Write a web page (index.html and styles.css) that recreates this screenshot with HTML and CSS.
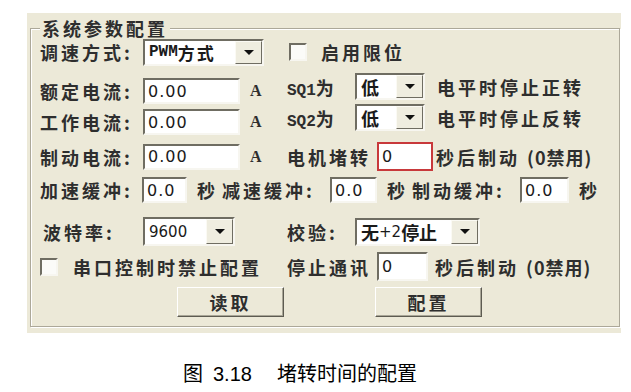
FILE: index.html
```html
<!DOCTYPE html>
<html lang="zh-CN">
<head>
    <meta charset="UTF-8">
    <title>系统参数配置</title>
    <link rel="stylesheet" href="styles.css">
</head>
<body>

<div class="window">
    <fieldset class="group">
        <legend>系统参数配置</legend>

        <div class="row split r1">
            <div class="cell">
                <span class="lbl-main">调速方式:</span>
                <div class="combo combo-mode">
                    <span class="combo-text"><span class="mono">PWM</span><span class="cjk-sm">方式</span></span>
                    <span class="combo-btn"></span>
                </div>
            </div>
            <div class="cell">
                <span class="check check-limit"></span>
                <span class="check-text">启用限位</span>
            </div>
        </div>

        <div class="row split r2">
            <div class="cell">
                <span class="lbl-main">额定电流:</span>
                <span class="field field-amp">0.00</span>
                <span class="unit">A</span>
            </div>
            <div class="cell raise">
                <span class="lbl-sq"><span class="mono">SQ1</span>为</span>
                <div class="combo combo-level">
                    <span class="combo-text">低</span>
                    <span class="combo-btn"></span>
                </div>
                <span class="after">电平时停止正转</span>
            </div>
        </div>

        <div class="row split r3">
            <div class="cell">
                <span class="lbl-main">工作电流:</span>
                <span class="field field-amp">0.00</span>
                <span class="unit">A</span>
            </div>
            <div class="cell raise">
                <span class="lbl-sq"><span class="mono">SQ2</span>为</span>
                <div class="combo combo-level">
                    <span class="combo-text">低</span>
                    <span class="combo-btn"></span>
                </div>
                <span class="after">电平时停止反转</span>
            </div>
        </div>

        <div class="row split r4">
            <div class="cell">
                <span class="lbl-main">制动电流:</span>
                <span class="field field-amp">0.00</span>
                <span class="unit">A</span>
            </div>
            <div class="cell">
                <span class="lbl-right">电机堵转</span>
                <span class="field field-red">0</span>
                <span class="after-sm">秒后制动 <span class="note">(0禁用)</span></span>
            </div>
        </div>

        <div class="row r5">
            <span class="lbl-buf first">加速缓冲:</span>
            <span class="field field-buf b1">0.0</span>
            <span class="sec">秒</span>
            <span class="lbl-buf">减速缓冲:</span>
            <span class="field field-buf b2">0.0</span>
            <span class="sec">秒</span>
            <span class="lbl-buf">制动缓冲:</span>
            <span class="field field-buf b3">0.0</span>
            <span class="sec">秒</span>
        </div>

        <div class="row split r6">
            <div class="cell">
                <span class="lbl-baud">波特率:</span>
                <div class="combo combo-baud">
                    <span class="combo-text sans">9600</span>
                    <span class="combo-btn"></span>
                </div>
            </div>
            <div class="cell">
                <span class="lbl-sq">校验:</span>
                <div class="combo combo-parity">
                    <span class="combo-text">无<span class="sans">+2</span>停止</span>
                    <span class="combo-btn"></span>
                </div>
            </div>
        </div>

        <div class="row split r7">
            <div class="cell">
                <span class="check"></span>
                <span class="check-text wide">串口控制时禁止配置</span>
            </div>
            <div class="cell">
                <span class="lbl-right">停止通讯</span>
                <span class="field field-stop">0</span>
                <span class="after-md">秒后制动 <span class="note">(0禁用)</span></span>
            </div>
        </div>

        <div class="row buttons">
            <button class="btn">读取</button>
            <button class="btn">配置</button>
        </div>
    </fieldset>
</div>

<div class="caption">
    <span>图</span><span class="fig-no">3.18</span><span class="fig-title">堵转时间的配置</span>
</div>

</body>
</html>
```

FILE: styles.css
```css
body {
    margin: 0;
    background: #fff;
    font-family: "Noto Sans CJK SC", sans-serif;
    color: #2e2e2e;
}

.window {
    margin: 13px 0 0 27px;
    width: 590px;
    padding: 5px 1px 6px 3px;
    background: #ece9d8;
}

.group {
    margin: 0;
    min-width: 0;
    padding: 0 9px 9px 9px;
    border: 1px solid #aca899;
    box-shadow: inset 1px 1px #fff, 1px 1px #fff;
}

.group legend {
    padding: 0 2px 0 2px;
    font-size: 18px;
    font-weight: bold;
    line-height: 20px;
    letter-spacing: 3px;
    background: #ece9d8;
}

.row {
    display: flex;
    align-items: center;
    height: 28px;
    font-size: 18px;
    font-weight: bold;
    letter-spacing: 3px;
    white-space: nowrap;
}

.row.split {
    display: grid;
    grid-template-columns: 247px auto;
}

.cell {
    display: flex;
    align-items: center;
    height: 100%;
}

.r2 { margin-top: 11px; }
.r3 { margin-top: 3px; }
.r4 { margin-top: 6px; }
.r5 { margin-top: 6px; }
.r6 { margin-top: 13px; height: 29px; }
.r7 { margin-top: 6px; height: 29px; }
.buttons { margin-top: 6px; height: 30px; padding-left: 137px; gap: 91px; }

.raise { margin-top: -9px; }

/* labels */
.lbl-main { width: 103px; }
.lbl-sq { width: 68px; }
.lbl-right { width: 90px; }
.lbl-baud { width: 100px; margin-left: 3px; }
.lbl-buf { width: 108px; margin-left: 3px; }
.lbl-buf.first { width: 102px; margin-left: 0; }
.check-text { margin-left: 14px; }
.check-text.wide { margin-left: 15px; }
.after { margin-left: 12px; }
.after-sm { margin-left: 3px; }
.after-md { margin-left: 7px; }
.sec { width: 22px; margin-left: 10px; }
.note { letter-spacing: 1px; }

.mono {
    font-family: "Liberation Mono", monospace;
    font-weight: bold;
    font-size: 16px;
    letter-spacing: 0;
}

.sans {
    font-family: "DejaVu Sans", sans-serif;
    font-size: 15px;
    font-weight: normal;
    letter-spacing: 0;
}

.cjk-sm {
    font-size: 17px;
    letter-spacing: 2px;
}

.unit {
    padding-left: 10px;
    font-family: "Liberation Serif", serif;
    font-weight: bold;
    font-size: 16px;
}

/* sunken edit boxes */
.field {
    box-sizing: border-box;
    height: 26px;
    padding: 0 0 0 3px;
    display: flex;
    align-items: center;
    background: #fff;
    border: 2px solid;
    border-color: #6f6d62 #f7f6f0 #f7f6f0 #6f6d62;
    font-family: "DejaVu Sans", sans-serif;
    font-size: 16px;
    font-weight: normal;
    letter-spacing: 1px;
    color: #1a1a1a;
}

.field-amp { width: 97px; }
.field-buf { width: 47px; }
.field-buf.b1 { width: 45px; }
.field-buf.b3 { width: 49px; }
.field-stop { width: 51px; height: 29px; }

.field-red {
    width: 56px;
    height: 29px;
    border-color: #c8393b;
}

/* combo boxes */
.combo {
    box-sizing: border-box;
    height: 27px;
    display: flex;
    background: #fff;
    border: 2px solid;
    border-color: #6f6d62 #f7f6f0 #f7f6f0 #6f6d62;
}

.combo-mode { width: 121px; }
.combo-level { width: 70px; }
.combo-baud { width: 92px; height: 29px; }
.combo-parity { width: 125px; height: 28px; }

.combo-text {
    flex: 1;
    display: flex;
    align-items: center;
    padding-left: 4px;
    letter-spacing: 0;
    color: #1a1a1a;
}

.combo-btn {
    width: 25px;
    display: flex;
    align-items: center;
    justify-content: center;
    background: #efede0;
    border: 1px solid;
    border-color: #fbfaf4 #6f6d62 #6f6d62 #fbfaf4;
}

.combo-btn::after {
    content: "";
    border-left: 5px solid transparent;
    border-right: 5px solid transparent;
    border-top: 5px solid #111;
}

/* check boxes */
.check {
    box-sizing: border-box;
    width: 18px;
    height: 18px;
    background: #fbfbf8;
    border: 2px solid;
    border-color: #6f6d62 #f7f6f0 #f7f6f0 #6f6d62;
}

.check-limit { margin-left: 2px; }

/* push buttons */
.btn {
    box-sizing: border-box;
    width: 107px;
    height: 30px;
    padding: 0;
    background: #ece9d8;
    border: 1px solid;
    border-color: #fff #5d5b51 #5d5b51 #fff;
    box-shadow: inset -1px -1px #a9a697;
    font-family: "Noto Sans CJK SC", sans-serif;
    font-size: 18px;
    font-weight: bold;
    letter-spacing: 3px;
    color: #2e2e2e;
}

.caption {
    margin-top: 28px;
    padding-left: 183px;
    font-size: 20px;
    line-height: 24px;
    color: #000;
    white-space: nowrap;
}

.fig-no {
    margin-left: 10px;
    font-family: "Liberation Sans", sans-serif;
}

.fig-title { margin-left: 25px; }
```
